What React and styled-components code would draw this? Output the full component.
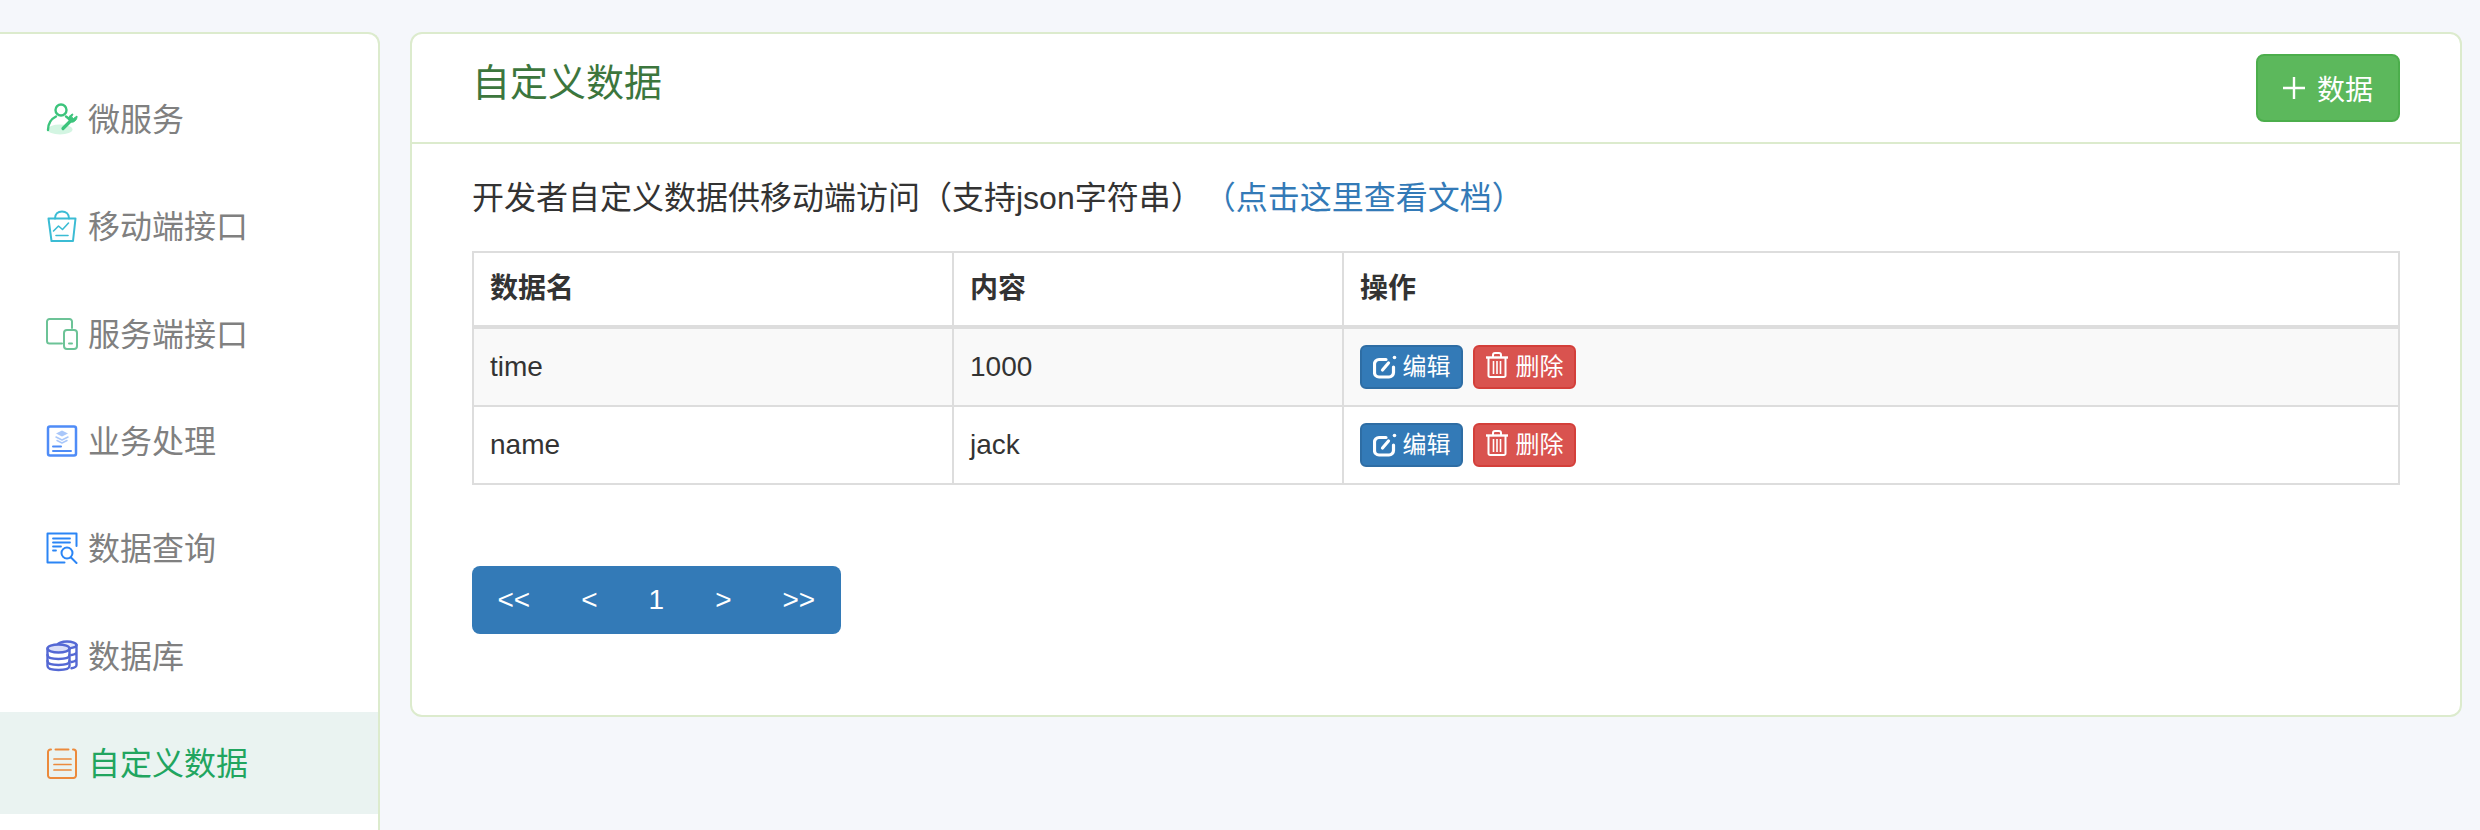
import React from "react";
import styled, { createGlobalStyle } from "styled-components";

const GlobalStyle = createGlobalStyle`
  html, body {
    margin: 0;
    height: 100%;
    overflow: hidden;
    background: #f5f7fb;
    font-family: "Liberation Sans", "Noto Sans CJK SC", sans-serif;
  }
  * { box-sizing: border-box; }
`;

const Page = styled.div`
  display: flex;
  align-items: flex-start;
  gap: 30px;
  height: 100vh;
  padding: 32px 20px 0 0;
`;

const Sidebar = styled.nav`
  flex: none;
  width: 380px;
  height: calc(100vh - 32px);
  padding-top: 34px;
  display: flex;
  flex-direction: column;
  gap: 5.33px;
  background: #fff;
  border: 2px solid #dcebcd;
  border-left: none;
  border-bottom: none;
  border-top-right-radius: 12px;
`;

const MenuItem = styled.a`
  flex: none;
  height: 102px;
  display: flex;
  align-items: center;
  gap: 10px;
  padding-left: 46px;
  font-size: 32px;
  color: ${(p) => (p.$active ? "#21a55f" : "#808080")};
  background: ${(p) => (p.$active ? "#eaf3f1" : "transparent")};
`;

const MenuLabel = styled.span`
  padding-bottom: 4px;
`;

const MenuIcon = styled.svg`
  flex: none;
  width: 32px;
  height: 32px;
`;

const Panel = styled.main`
  flex: 1;
  background: #fff;
  border: 2px solid #dcebcd;
  border-radius: 12px;
`;

const PanelHead = styled.header`
  height: 110px;
  padding: 20px 60px 0 60px;
  display: flex;
  justify-content: space-between;
  align-items: flex-start;
  border-bottom: 2px solid #dcebcd;
`;

const Title = styled.h2`
  margin: 0;
  font-size: 38px;
  line-height: 58px;
  font-weight: 400;
  color: #3c763d;
`;

const AddButton = styled.button`
  width: 144px;
  height: 68px;
  display: flex;
  align-items: center;
  justify-content: center;
  gap: 12px;
  border: 2px solid #4cae4c;
  border-radius: 8px;
  background: #5cb85c;
  color: #fff;
  font: inherit;
  font-size: 28px;
`;

const PanelBody = styled.section`
  padding: 31px 60px 81px 60px;
`;

const Intro = styled.p`
  margin: 0 0 30px;
  font-size: 32px;
  line-height: 46px;
  color: #333;
`;

const DocLink = styled.a`
  color: #337ab7;
  margin-left: 17px;
`;

const Table = styled.table`
  width: 1926px;
  table-layout: fixed;
  border-collapse: collapse;
  font-size: 28px;
  color: #333;
`;

const HeadCell = styled.th`
  height: 75px;
  padding: 16px;
  text-align: left;
  font-weight: 700;
  line-height: 40px;
  border: 2px solid #ddd;
  border-bottom-width: 4px;
`;

const Row = styled.tr`
  background: ${(p) => (p.$striped ? "#f9f9f9" : "#fff")};
  height: ${(p) => (p.$striped ? "79px" : "78px")};
`;

const Cell = styled.td`
  padding: 0 16px;
  line-height: 40px;
  border: 2px solid #ddd;
`;

const Actions = styled.div`
  display: flex;
  gap: 10px;
`;

const ActionButton = styled.button`
  width: 103px;
  height: 44px;
  padding: 0;
  display: flex;
  align-items: center;
  justify-content: center;
  gap: ${(p) => (p.$danger ? "8px" : "6px")};
  border: 2px solid ${(p) => (p.$danger ? "#d43f3a" : "#2e6da4")};
  border-radius: 6px;
  background: ${(p) => (p.$danger ? "#d9534f" : "#337ab7")};
  color: #fff;
  font: inherit;
  font-size: 24px;
  line-height: 1;
`;

const TrashGlyph = styled.svg`
  margin-bottom: 4px;
`;

const Pager = styled.div`
  display: flex;
  width: fit-content;
  margin-top: 81px;
  height: 68px;
  align-items: center;
  border-radius: 8px;
  background: #337ab7;
  color: #fff;
  font-size: 28px;
`;

const PagerItem = styled.span`
  padding: 0 25.5px;
  line-height: 40px;
`;

const ICON_PROPS = { viewBox: "0 0 32 32", fill: "none", strokeLinecap: "round", strokeLinejoin: "round" };

const UserIcon = () => (
  <MenuIcon {...ICON_PROPS} stroke="#3cc47c" strokeWidth="2.400">
    <ellipse cx="14" cy="26.500" rx="12.500" ry="5" fill="#d3f5e2" stroke="none" />
    <circle cx="15" cy="7" r="5.500" />
    <path d="M2 27c0-6 3-11 8-13.500" />
    <path d="M20 13.500c1.500 1 2.500 1.800 3.500 3" />
    <path d="M17 25.500l8-8" strokeWidth="3.200" />
    <path d="M24 18.500c-2.500-3-.5-7 3-7.500l-1.500 3 2 1.500 3.500-2.500c.5 4-4 8-7 5.500z" fill="#3cc47c" strokeWidth="1" />
  </MenuIcon>
);

const BagIcon = () => (
  <MenuIcon {...ICON_PROPS} stroke="#3bbcd4" strokeWidth="2">
    <path d="M2.500 8.500h27l-2.500 22.500H5.500z" />
    <path d="M9 8.500C9 4 12 1.500 16 1.500s7 2.500 7 7" />
    <path d="M7.500 21l5-5 4 3.500 6-6.500" strokeWidth="1.600" />
    <path d="M10 25.500h12" strokeWidth="1.600" />
  </MenuIcon>
);

const DevicesIcon = () => (
  <MenuIcon {...ICON_PROPS} stroke="#6cc397" strokeWidth="2">
    <path d="M16 25.500H3.500a2.500 2.500 0 0 1-2.500-2.500V3.500A2.500 2.500 0 0 1 3.500 1h20a2.500 2.500 0 0 1 2.500 2.500V10" />
    <rect x="18" y="12" width="13" height="19" rx="3" />
    <path d="M23 25.500h3" />
  </MenuIcon>
);

const TaskIcon = () => (
  <MenuIcon {...ICON_PROPS} stroke="#4f8cf7" strokeWidth="2">
    <rect x="2" y="1.500" width="28" height="29" rx="2" strokeWidth="2.500" />
    <path d="M16 5.500l6 3-6 3-6-3z" fill="#a9c7fa" stroke="none" />
    <path d="M10 12l6 3 6-3M11 15.500l5 2.500 5-2.500" stroke="#a9c7fa" strokeWidth="1.500" />
    <path d="M7 21.500h8M7 26h18" strokeWidth="2" />
  </MenuIcon>
);

const SearchIcon = () => (
  <MenuIcon {...ICON_PROPS} stroke="#2b85f5" strokeWidth="2">
    <path d="M30.500 14V1.500H1.500v29h17" />
    <path d="M7 6.500h17M7 10.500h17M7 14.500h8M7 18.500h3" strokeWidth="1.800" />
    <circle cx="21" cy="21" r="5.500" />
    <path d="M25 25.500l5.500 5.500" />
  </MenuIcon>
);

const DatabaseIcon = () => (
  <MenuIcon {...ICON_PROPS} stroke="#5468d4" strokeWidth="2.400">
    <ellipse cx="21" cy="5" rx="9.500" ry="3.500" fill="#e4e8fa" />
    <path d="M30.500 5v20c0 1.800-2 2.800-5 3.300M30.500 12c0 1.500-2 2.500-5 3M30.500 19c0 1.500-2 2.500-5 3" />
    <ellipse cx="12.500" cy="8.500" rx="11" ry="4" fill="#d9def8" />
    <path d="M1.500 8.500V26c0 2.500 4.500 4 11 4s11-1.500 11-4V8.500" />
    <path d="M1.500 15c0 2.500 4.500 4 11 4s11-1.500 11-4M1.500 21c0 2.500 4.500 4 11 4s11-1.500 11-4" />
  </MenuIcon>
);

const NoteIcon = () => (
  <MenuIcon {...ICON_PROPS} stroke="#ec8a3c" strokeWidth="2">
    <path d="M5 2.500H4.500A2.500 2.500 0 0 0 2 5v23.500A2.500 2.500 0 0 0 4.500 31h23a2.500 2.500 0 0 0 2.500-2.500V5a2.500 2.500 0 0 0-2.500-2.500H27" />
    <path d="M9.500 2.500h13" />
    <path d="M8 12h17M8 17.500h17M8 23h17" strokeWidth="1.700" />
  </MenuIcon>
);

const PlusIcon = () => (
  <svg width="22" height="22" viewBox="0 0 22 22" fill="none" stroke="#fff" strokeWidth="2.400">
    <path d="M11 0v22M0 11h22" />
  </svg>
);

const EditIcon = () => (
  <svg width="24" height="24" viewBox="0 0 24 24" fill="none" stroke="#fff" strokeWidth="3.200" strokeLinecap="round">
    <path d="M13 4.500H6a4.500 4.500 0 0 0-4.500 4.500v8.500A4.500 4.500 0 0 0 6 22h10a4.500 4.500 0 0 0 4.500-4.500V12" />
    <path d="M9.500 15l6-7" />
    <circle cx="21.500" cy="2.500" r="1.800" fill="#fff" stroke="none" />
  </svg>
);

const TrashIcon = () => (
  <TrashGlyph width="22" height="26" viewBox="0 0 22 26" fill="none" stroke="#fff" strokeWidth="2">
    <path d="M0 5.500h22" strokeWidth="2.400" />
    <path d="M7 5V3a2 2 0 0 1 2-2h4a2 2 0 0 1 2 2v2" />
    <path d="M2.500 6v17.500a1.500 1.500 0 0 0 1.500 1.500h14a1.500 1.500 0 0 0 1.500-1.500V6" />
    <path d="M7.500 9v13M11 9v13M14.500 9v13" strokeWidth="1.600" />
  </TrashGlyph>
);

const MENU = [
  { label: "微服务", Icon: UserIcon },
  { label: "移动端接口", Icon: BagIcon },
  { label: "服务端接口", Icon: DevicesIcon },
  { label: "业务处理", Icon: TaskIcon },
  { label: "数据查询", Icon: SearchIcon },
  { label: "数据库", Icon: DatabaseIcon },
  { label: "自定义数据", Icon: NoteIcon, active: true },
];

const ROWS = [
  { name: "time", value: "1000" },
  { name: "name", value: "jack" },
];

export default function App() {
  return (
    <Page>
      <GlobalStyle />
      <Sidebar>
        {MENU.map(({ label, Icon, active }) => (
          <MenuItem key={label} $active={active}>
            <Icon />
            <MenuLabel>{label}</MenuLabel>
          </MenuItem>
        ))}
      </Sidebar>
      <Panel>
        <PanelHead>
          <Title>自定义数据</Title>
          <AddButton>
            <PlusIcon />
            数据
          </AddButton>
        </PanelHead>
        <PanelBody>
          <Intro>
            开发者自定义数据供移动端访问（支持json字符串）
            <DocLink>（点击这里查看文档）</DocLink>
          </Intro>
          <Table>
            <colgroup>
              <col width="480" />
              <col width="390" />
              <col width="1056" />
            </colgroup>
            <thead>
              <tr>
                <HeadCell>数据名</HeadCell>
                <HeadCell>内容</HeadCell>
                <HeadCell>操作</HeadCell>
              </tr>
            </thead>
            <tbody>
              {ROWS.map((row, i) => (
                <Row key={row.name} $striped={i === 0}>
                  <Cell>{row.name}</Cell>
                  <Cell>{row.value}</Cell>
                  <Cell>
                    <Actions>
                      <ActionButton>
                        <EditIcon />
                        编辑
                      </ActionButton>
                      <ActionButton $danger>
                        <TrashIcon />
                        删除
                      </ActionButton>
                    </Actions>
                  </Cell>
                </Row>
              ))}
            </tbody>
          </Table>
          <Pager>
            {["<<", "<", "1", ">", ">>"].map((t) => (
              <PagerItem key={t}>{t}</PagerItem>
            ))}
          </Pager>
        </PanelBody>
      </Panel>
    </Page>
  );
}
